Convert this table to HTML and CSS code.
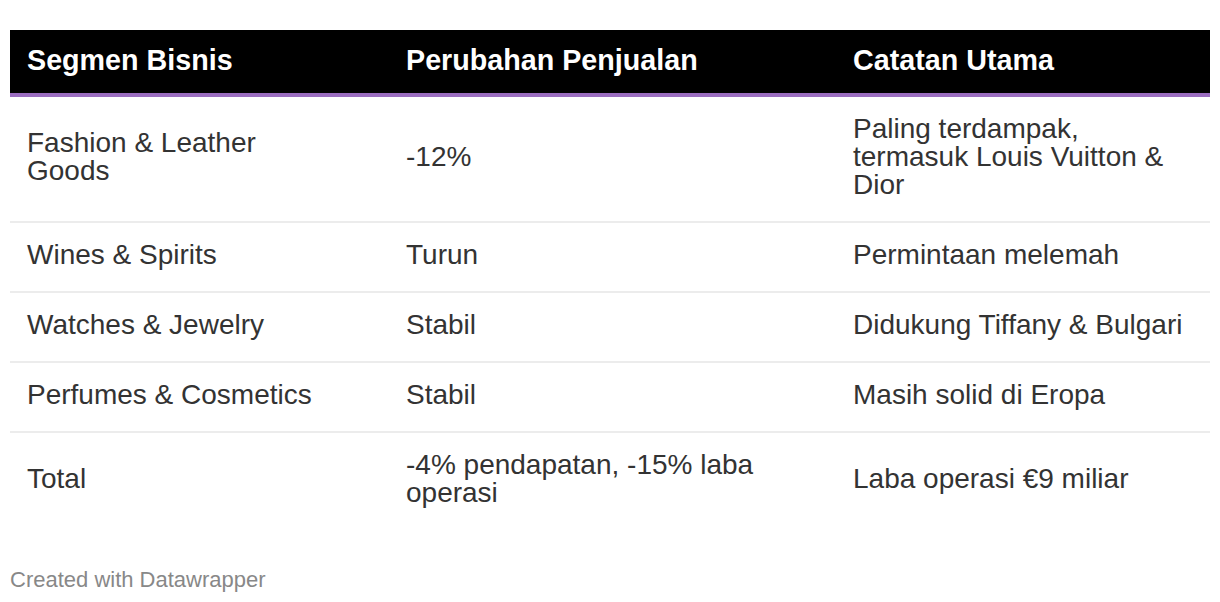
FILE: index.html
```html
<!DOCTYPE html>
<html lang="id">
<head>
<meta charset="utf-8">
<title>Segmen Bisnis</title>
<link rel="stylesheet" href="styles.css">
</head>
<body>
<div class="wrap">
  <table class="dw-table">
    <colgroup>
      <col class="col-a">
      <col class="col-b">
      <col class="col-c">
    </colgroup>
    <thead>
      <tr>
        <th class="first">Segmen Bisnis</th>
        <th>Perubahan Penjualan</th>
        <th>Catatan Utama</th>
      </tr>
    </thead>
    <tbody>
      <tr>
        <td class="first">Fashion &amp; Leather Goods</td>
        <td>-12%</td>
        <td>Paling terdampak, termasuk Louis Vuitton &amp; Dior</td>
      </tr>
      <tr>
        <td class="first">Wines &amp; Spirits</td>
        <td>Turun</td>
        <td>Permintaan melemah</td>
      </tr>
      <tr>
        <td class="first">Watches &amp; Jewelry</td>
        <td>Stabil</td>
        <td>Didukung Tiffany &amp; Bulgari</td>
      </tr>
      <tr>
        <td class="first">Perfumes &amp; Cosmetics</td>
        <td>Stabil</td>
        <td>Masih solid di Eropa</td>
      </tr>
      <tr class="last">
        <td class="first">Total</td>
        <td>-4% pendapatan, -15% laba operasi</td>
        <td>Laba operasi €9 miliar</td>
      </tr>
    </tbody>
  </table>
  <div class="footer">Created with Datawrapper</div>
</div>
</body>
</html>
```

FILE: styles.css
```css
html, body {
  margin: 0;
  padding: 0;
  background: #ffffff;
}

body {
  font-family: "Liberation Sans", Arial, Helvetica, sans-serif;
  color: #333333;
}

.wrap {
  padding: 30px 10px 0 10px;
}

.dw-table {
  width: 1200px;
  border-collapse: collapse;
  table-layout: fixed;
}

.col-a { width: 379px; }
.col-b { width: 447px; }
.col-c { width: 374px; }

.dw-table th {
  background: #000000;
  color: #ffffff;
  font-weight: bold;
  font-size: 28.7px;
  line-height: 28px;
  text-align: left;
  padding: 16px 16px 19px 17px;
  border-bottom: 4px solid #9b6dc0;
}

.dw-table td {
  font-size: 28px;
  line-height: 28px;
  text-align: left;
  vertical-align: middle;
  padding: 18px 16px 22px 17px;
  border-bottom: 2px solid #ececec;
}

.dw-table td.first {
  padding-right: 60px;
}

.dw-table tr.last td {
  border-bottom: none;
}

.footer {
  margin-top: 38px;
  font-size: 22px;
  line-height: 26px;
  color: #888888;
}
```
